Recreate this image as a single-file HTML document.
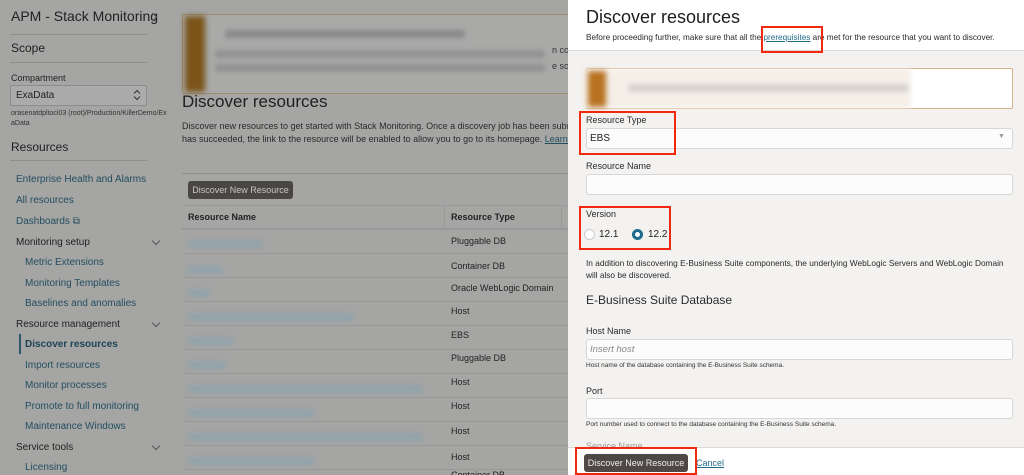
<!DOCTYPE html>
<html><head><meta charset="utf-8"><style>
*{margin:0;padding:0;box-sizing:border-box}
html{width:1024px;height:475px;overflow:hidden}
body{width:1024px;height:475px;overflow:hidden;position:relative;font-family:"Liberation Sans",sans-serif;background:#a5a5a4;color:#1e1d1c}
.a{position:absolute;white-space:nowrap}
.sb{color:#1f1f1f}
.lk{color:#234e5f;font-size:10px}
.hr{position:absolute;height:1px;background:#8e8e8d}
.chev{position:absolute;width:6px;height:6px;border-right:1px solid #555;border-bottom:1px solid #555;transform:rotate(45deg)}
.row{position:absolute;left:182px;width:386px;height:24px;border-top:1px solid #999}
.blur{position:absolute;height:8px;background:#93a3ab;filter:blur(2px);border-radius:3px}
.panel{position:absolute;left:568px;top:0;width:456px;height:475px;background:#f3f2f1;overflow:hidden}
.inp{position:absolute;left:18px;width:427px;height:21px;background:#fcfcfc;border:1px solid #d8d7d5;border-radius:3px}
.red{position:absolute;border:2px solid #f0290e}
</style></head><body>
<div class="a sb" style="left:11px;top:8px;font-size:14px">APM - Stack Monitoring</div>
<div class="chev" style="left:150px;top:14px;transform:rotate(-45deg)"></div>
<div class="hr" style="left:10px;top:34px;width:137px"></div>
<div class="a sb" style="left:11px;top:41px;font-size:12px">Scope</div>
<div class="hr" style="left:10px;top:62px;width:137px"></div>
<div class="a sb" style="left:11px;top:73px;font-size:9px">Compartment</div>
<div style="position:absolute;left:10px;top:85px;width:137px;height:21px;border:1px solid #8c8c8c;border-radius:2px;background:#ababab"></div>
<div class="a sb" style="left:16px;top:90px;font-size:10px">ExaData</div>
<svg style="position:absolute;left:133px;top:89px" width="8" height="12" viewBox="0 0 8 12"><path d="M1 4.5L4 1.5L7 4.5M1 7.5L4 10.5L7 7.5" fill="none" stroke="#333" stroke-width="1"/></svg>
<div class="a" style="left:11px;top:109px;font-size:7px;color:#333;line-height:10px">orasenatdpltoci03 (root)/Production/KillerDemo/Ex<br>aData</div>
<div class="a sb" style="left:11px;top:140px;font-size:12px">Resources</div>
<div class="hr" style="left:10px;top:160px;width:137px"></div>
<div class="a lk" style="left:16px;top:174px">Enterprise Health and Alarms</div>
<div class="a lk" style="left:16px;top:195px">All resources</div>
<div class="a lk" style="left:16px;top:216px">Dashboards &#10697;</div>
<div class="a sb" style="left:16px;top:237px;font-size:10px">Monitoring setup</div>
<div class="chev" style="left:153px;top:238px"></div>
<div class="a lk" style="left:25px;top:257px">Metric Extensions</div>
<div class="a lk" style="left:25px;top:278px">Monitoring Templates</div>
<div class="a lk" style="left:25px;top:298px">Baselines and anomalies</div>
<div class="a sb" style="left:16px;top:319px;font-size:10px">Resource management</div>
<div class="chev" style="left:153px;top:320px"></div>
<div style="position:absolute;left:19px;top:334px;width:2px;height:20px;background:#2e5566"></div>
<div class="a lk" style="left:25px;top:339px;font-weight:bold;color:#1c4455">Discover resources</div>
<div class="a lk" style="left:25px;top:360px">Import resources</div>
<div class="a lk" style="left:25px;top:380px">Monitor processes</div>
<div class="a lk" style="left:25px;top:401px">Promote to full monitoring</div>
<div class="a lk" style="left:25px;top:421px">Maintenance Windows</div>
<div class="a sb" style="left:16px;top:442px;font-size:10px">Service tools</div>
<div class="chev" style="left:153px;top:443px"></div>
<div class="a lk" style="left:25px;top:462px">Licensing</div>
<div style="position:absolute;left:182px;top:14px;width:386px;height:80px;background:#a9a9a8;border:1px solid #9c8c74;border-right:none"></div>
<div style="position:absolute;left:185px;top:16px;width:20px;height:76px;background:#7a5418;filter:blur(3px)"></div>
<div class="blur" style="left:225px;top:30px;width:240px;background:#8a8a8a"></div>
<div class="blur" style="left:215px;top:50px;width:330px;background:#939393"></div>
<div class="blur" style="left:215px;top:64px;width:330px;background:#939393"></div>
<div class="a" style="left:552px;top:45px;font-size:9px;color:#333">n cor</div>
<div class="a" style="left:552px;top:61px;font-size:9px;color:#333">e solu</div>
<div class="a sb" style="left:182px;top:92px;font-size:17px">Discover resources</div>
<div class="a" style="left:182px;top:120px;font-size:9px;color:#2a2a2a;line-height:13px">Discover new resources to get started with Stack Monitoring. Once a discovery job has been submitted<br>has succeeded, the link to the resource will be enabled to allow you to go to its homepage. <span style="color:#234e5f;text-decoration:underline">Learn More</span></div>
<div class="hr" style="left:182px;top:173px;width:386px"></div>
<div style="position:absolute;left:188px;top:181px;width:105px;height:18px;background:#4a4644;border-radius:3px;color:#c8c6c4;font-size:9px;line-height:18px;text-align:center">Discover New Resource</div>
<div style="position:absolute;left:182px;top:205px;width:386px;height:24px;border-top:1px solid #999;border-bottom:1px solid #999"></div>
<div style="position:absolute;left:444px;top:205px;width:1px;height:24px;background:#999"></div>
<div style="position:absolute;left:561px;top:205px;width:1px;height:24px;background:#999"></div>
<div class="a" style="left:188px;top:212px;font-size:9px;font-weight:bold;color:#222">Resource Name</div>
<div class="a" style="left:451px;top:212px;font-size:9px;font-weight:bold;color:#222">Resource Type</div>
<div class="row" style="top:229px"></div>
<div class="a" style="left:451px;top:236px;font-size:9px;color:#222">Pluggable DB</div>
<div class="row" style="top:253px"></div>
<div class="a" style="left:451px;top:261px;font-size:9px;color:#222">Container DB</div>
<div class="row" style="top:277px"></div>
<div class="a" style="left:451px;top:283px;font-size:9px;color:#222">Oracle WebLogic Domain</div>
<div class="row" style="top:301px"></div>
<div class="a" style="left:451px;top:306px;font-size:9px;color:#222">Host</div>
<div class="row" style="top:325px"></div>
<div class="a" style="left:451px;top:330px;font-size:9px;color:#222">EBS</div>
<div class="row" style="top:349px"></div>
<div class="a" style="left:451px;top:353px;font-size:9px;color:#222">Pluggable DB</div>
<div class="row" style="top:373px"></div>
<div class="a" style="left:451px;top:377px;font-size:9px;color:#222">Host</div>
<div class="row" style="top:397px"></div>
<div class="a" style="left:451px;top:401px;font-size:9px;color:#222">Host</div>
<div class="row" style="top:421px"></div>
<div class="a" style="left:451px;top:426px;font-size:9px;color:#222">Host</div>
<div class="row" style="top:445px"></div>
<div class="a" style="left:451px;top:452px;font-size:9px;color:#222">Host</div>
<div style="position:absolute;left:182px;top:469px;width:386px;height:1px;background:#999"></div>
<div class="a" style="left:451px;top:470px;font-size:9px;color:#222;height:5px;overflow:hidden">Container DB</div>
<div class="blur" style="left:188px;top:240px;width:75px"></div>
<div class="blur" style="left:188px;top:266px;width:35px"></div>
<div class="blur" style="left:188px;top:289px;width:22px"></div>
<div class="blur" style="left:188px;top:313px;width:166px"></div>
<div class="blur" style="left:188px;top:337px;width:45px"></div>
<div class="blur" style="left:188px;top:361px;width:38px"></div>
<div class="blur" style="left:188px;top:385px;width:235px"></div>
<div class="blur" style="left:188px;top:409px;width:127px"></div>
<div class="blur" style="left:188px;top:433px;width:235px"></div>
<div class="blur" style="left:188px;top:457px;width:127px"></div>
<div class="panel">
  <div style="position:absolute;left:0;top:0;width:456px;height:51px;background:#fff;border-bottom:1px solid #dcdbd9"></div>
  <div class="a" style="left:18px;top:7px;font-size:18px;color:#1e1d1c">Discover resources</div>
  <div class="a" style="left:18px;top:33px;font-size:8.2px;color:#2a2a2a">Before proceeding further, make sure that all the <span style="color:#1f6b8a;text-decoration:underline">prerequisites</span> are met for the resource that you want to discover.</div>
  <div class="red" style="left:193px;top:26px;width:62px;height:27px"></div>
  <div style="position:absolute;left:18px;top:68px;width:427px;height:41px;background:#fff;border:1px solid #d4b389;border-radius:2px"></div>
  <div style="position:absolute;left:13px;top:69px;width:330px;height:39px;background:#f5efe8;filter:blur(2px)"></div>
  <div style="position:absolute;left:20px;top:71px;width:18px;height:36px;background:#b7711f;filter:blur(3px)"></div>
  <div class="blur" style="left:60px;top:84px;width:280px;background:#d6d2cf"></div>
  <div class="a" style="left:18px;top:115px;font-size:9px;color:#2a2a2a">Resource Type</div>
  <div class="inp" style="top:128px"></div>
  <div class="a" style="left:22px;top:133px;font-size:10px;color:#222">EBS</div>
  <div class="a" style="left:430px;top:133px;font-size:7px;color:#999">&#9660;</div>
  <div class="red" style="left:11px;top:111px;width:97px;height:44px"></div>
  <div class="a" style="left:18px;top:161px;font-size:9px;color:#2a2a2a">Resource Name</div>
  <div class="inp" style="top:174px"></div>
  <div class="a" style="left:18px;top:209px;font-size:9px;color:#2a2a2a">Version</div>
  <div style="position:absolute;left:16px;top:229px;width:11px;height:11px;border-radius:50%;background:#fff;border:1px solid #ccc"></div>
  <div class="a" style="left:31px;top:229px;font-size:10px;color:#222">12.1</div>
  <div style="position:absolute;left:64px;top:229px;width:11px;height:11px;border-radius:50%;background:#fff;border:3.5px solid #1e6a8c"></div>
  <div class="a" style="left:80px;top:229px;font-size:10px;color:#222">12.2</div>
  <div class="red" style="left:11px;top:206px;width:92px;height:44px"></div>
  <div class="a" style="left:18px;top:257px;font-size:8.3px;color:#2a2a2a;line-height:12px">In addition to discovering E-Business Suite components, the underlying WebLogic Servers and WebLogic Domain<br>will also be discovered.</div>
  <div class="a" style="left:18px;top:293px;font-size:12px;color:#2a2a2a">E-Business Suite Database</div>
  <div class="a" style="left:18px;top:326px;font-size:9px;color:#2a2a2a">Host Name</div>
  <div class="inp" style="top:339px"></div>
  <div class="a" style="left:22px;top:344px;font-size:9.5px;color:#888;font-style:italic">Insert host</div>
  <div class="a" style="left:18px;top:362px;font-size:6.5px;color:#333">Host name of the database containing the E-Business Suite schema.</div>
  <div class="a" style="left:18px;top:386px;font-size:9px;color:#2a2a2a">Port</div>
  <div class="inp" style="top:398px"></div>
  <div class="a" style="left:18px;top:421px;font-size:6.5px;color:#333">Port number used to connect to the database containing the E-Business Suite schema.</div>
  <div class="a" style="left:18px;top:441px;font-size:9px;color:#999">Service Name</div>
  <div style="position:absolute;left:0;top:447px;width:456px;height:28px;background:#fff;border-top:1px solid #dcdbd9"></div>
  <div style="position:absolute;left:16px;top:454px;width:104px;height:18px;background:#4d4845;border-radius:3px;color:#eee;font-size:9px;line-height:18px;text-align:center">Discover New Resource</div>
  <div class="a" style="left:128px;top:458px;font-size:9px;color:#1f6b8a;text-decoration:underline">Cancel</div>
  <div class="red" style="left:7px;top:447px;width:122px;height:28px"></div>
</div>
</body></html>
